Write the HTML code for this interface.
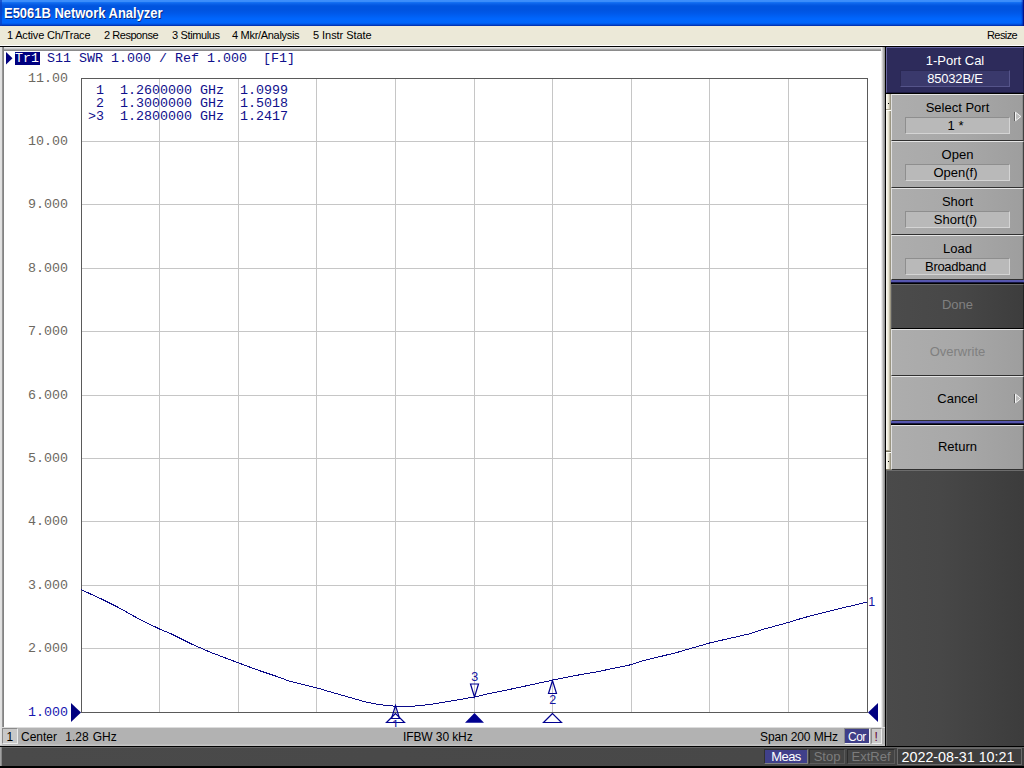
<!DOCTYPE html>
<html>
<head>
<meta charset="utf-8">
<title>E5061B Network Analyzer</title>
<style>
html,body{margin:0;padding:0;}
body{width:1024px;height:768px;overflow:hidden;background:#444444;position:relative;font-family:"Liberation Sans",sans-serif;}
.abs{position:absolute;}
#title{left:0;top:0;width:1024px;height:26px;background:linear-gradient(to bottom,#3d8ffc 0px,#3a8cfa 1.5px,#1470f2 2.5px,#0a60e8 4px,#0054de 6px,#0054e0 10px,#0058e8 13px,#0062f6 17px,#0066fe 19px,#0065fa 23px,#004cd8 24.5px,#0034b4 25.5px,#002ea8 26px);}
#title .t{position:absolute;left:4px;top:4.5px;font-size:14px;transform:scaleX(0.925);transform-origin:0 0;font-weight:bold;color:#fff;line-height:16px;white-space:nowrap;text-shadow:1px 1px 0 #0a2a80;}
#title .le{position:absolute;left:0;top:0;width:2px;height:26px;background:#0a3fc0;opacity:.7}
#menu{left:0;top:26px;width:1024px;height:19px;background:#ece9d8;}
#menu span{position:absolute;top:3px;font-size:11px;line-height:13px;color:#000;white-space:nowrap;}
#mline1{left:0;top:45px;width:1024px;height:1px;background:#ffffff;}
#mline2{left:0;top:46px;width:1024px;height:1px;background:#000000;}
/* plot window */
#plotwin{left:0;top:47px;width:885px;height:680px;background:#ffffff;}
#pw-l{left:0;top:47px;width:4px;height:680px;background:linear-gradient(to right,#e4e4e4 0,#dcdcdc 2px,#a0a0a0 2px,#787878 4px);}
#pw-t{left:0;top:47px;width:885px;height:4px;background:linear-gradient(to bottom,#e6e6e6 0,#e0e0e0 1px,#cccccc 1.5px,#a6a6a6 2.5px,#7e7e7e 4px);}
#pw-r{left:881px;top:47px;width:4px;height:700px;background:linear-gradient(to right,#fafafa 0,#e0e0e0 1px,#bababa 2px,#868686 4px);}
#vblack{left:885px;top:47px;width:1px;height:700px;background:#000;}
.mono{font-family:"Liberation Mono",monospace;font-size:13.33px;line-height:13px;white-space:pre;}
#trhdr{left:15px;top:52px;height:13px;color:#10108c;}
#trhdr b{font-weight:normal;background:#000080;color:#fff;display:inline-block;height:13px;width:25px;margin-right:-1px;}
#mk{left:88px;top:84px;color:#10108c;}
.yl{left:28px;width:40px;color:#6c6860;text-align:left;}
/* status bar */
#chbar{left:0;top:727px;width:885px;height:17px;background:#b2b2b2;}
#chbar .tx{position:absolute;top:3px;font-size:12px;line-height:14px;color:#000;white-space:pre;}
#hl745{left:0;top:744px;width:885px;height:2px;background:linear-gradient(to bottom,#b8b8b8,#c6c6c6);}
#bl746{left:0;top:746px;width:1024px;height:1px;background:#000;}
#botbar{left:0;top:747px;width:1024px;height:21px;background:linear-gradient(to right,#4a4a4a 0,#484848 75%,#3e3e3e 100%);}
.sb{position:absolute;top:749px;height:15px;font-size:14px;line-height:15px;text-align:center;white-space:nowrap;box-sizing:border-box;}
/* soft keys */
#sktitle{left:886px;top:47px;width:138px;height:46px;background:#2d2b5b;box-sizing:border-box;border-top:1px solid #6a68a2;border-left:1px solid #6a68a2;border-right:1px solid #1c1a40;border-bottom:1px solid #1c1a40;}
#sktitle .a{position:absolute;left:0;width:100%;top:5px;text-align:center;color:#fff;font-size:13px;line-height:15px;}
#sktitle .b{position:absolute;left:13px;top:22px;width:110px;height:17px;box-sizing:border-box;background:#3a396c;border-top:1px solid #2a2854;border-left:1px solid #2a2854;border-right:1px solid #55548a;border-bottom:1px solid #55548a;text-align:center;color:#fff;font-size:13px;line-height:15px;letter-spacing:-0.2px;}
#skbl{left:886px;top:93px;width:138px;height:1px;background:#000;}
#handle{left:886px;top:94px;width:5px;height:376px;background:linear-gradient(to right,#fcfcf8 0,#f6f4ea 1px,#ece9d8 2px,#dcd8c4 3px,#a8a28c 4px,#8c8878 5px);}
.key{position:absolute;left:891px;width:133px;box-sizing:border-box;background:linear-gradient(to right,#adadad 0,#a8a8a8 50%,#9e9e9e 100%);border-top:1px solid #e4e4e4;border-left:1px solid #e0e0e0;border-right:1px solid #404040;border-bottom:1px solid #303030;box-shadow:inset -1px 0 0 #8c8c8c;color:#000;font-size:13px;text-align:center;}
.key .a{position:absolute;left:0;width:100%;text-align:center;line-height:15px;}
.key .v{position:absolute;left:13px;width:105px;height:17px;top:22px;padding-right:4px;box-sizing:border-box;background:#b9b9b9;border-top:1px solid #8e8e8e;border-left:1px solid #8e8e8e;border-right:1px solid #d4d4d4;border-bottom:1px solid #d4d4d4;line-height:15px;font-size:13px;}
.key.dark{background:linear-gradient(to right,#4b4b4b 0,#474747 50%,#3d3d3d 100%);box-shadow:none;border-top:1px solid #686868;border-left:1px solid #606060;border-right:1px solid #202020;border-bottom:1px solid #000;color:#808080;}
.key.dis{color:#808080;}
.sep{position:absolute;left:891px;width:133px;height:4px;background:linear-gradient(to bottom,#5a5ab4 0,#5252a8 2px,#1c1c50 2px,#101030 3px,#000 3px,#000 4px);}
</style>
</head>
<body>
<div id="title" class="abs"><div class="le"></div><div style="position:absolute;right:0;top:0;width:3px;height:26px;background:linear-gradient(to right,rgba(0,20,150,0) 0,rgba(0,20,150,.45) 1.5px,#00168e 2px,#00128a 3px)"></div><div class="t">E5061B Network Analyzer</div></div>
<div id="menu" class="abs">
<span style="left:7px;letter-spacing:-0.18px">1 Active Ch/Trace</span>
<span style="left:104px;letter-spacing:-0.46px">2 Response</span>
<span style="left:172px;letter-spacing:-0.36px">3 Stimulus</span>
<span style="left:232px;letter-spacing:-0.3px">4 Mkr/Analysis</span>
<span style="left:313px;letter-spacing:-0.05px">5 Instr State</span>
<span style="left:987px;letter-spacing:-0.58px">Resize</span>
</div>
<div id="mline1" class="abs"></div>
<div id="mline2" class="abs"></div>

<div id="plotwin" class="abs"></div>
<div id="pw-t" class="abs"></div>
<div id="pw-l" class="abs"></div>
<div id="pw-r" class="abs"></div>
<div id="vblack" class="abs"></div>

<svg class="abs" style="left:0;top:0" width="1024" height="768" viewBox="0 0 1024 768">
<g id="grid" shape-rendering="crispEdges" stroke="#c6c6c6" stroke-width="1">
<path d="M159.5 79V712M238.5 79V712M316.5 79V712M395.5 79V712M474.5 79V712M552.5 79V712M631.5 79V712M709.5 79V712M788.5 79V712"/>
<path d="M82 141.5H867M82 204.5H867M82 268.5H867M82 331.5H867M82 395.5H867M82 458.5H867M82 521.5H867M82 585.5H867M82 648.5H867"/>
</g>
<rect x="81.5" y="78.5" width="786" height="634" fill="none" stroke="#5a5a5a" stroke-width="1" shape-rendering="crispEdges"/>
<!-- trace -->
<path id="trace" fill="none" stroke="#0a0a8a" stroke-width="1" shape-rendering="crispEdges" stroke-linejoin="round" d="M81.0 589.6 L101.5 599.0 L117.8 607.2 L139.0 619.0 L159.5 629.0 L171.5 634.0 L191.5 644.0 L210.2 652.2 L238.2 662.8 L259.0 670.5 L279.0 677.2 L289.0 681.0 L300.0 683.8 L316.2 687.7 L332.5 692.5 L350.0 697.5 L365.0 701.8 L377.5 704.3 L387.5 705.6 L396.2 706.2 L415.0 706.0 L430.0 704.5 L450.0 701.2 L465.0 698.6 L475.0 696.9 L490.0 693.4 L512.5 688.8 L532.5 684.5 L552.5 680.2 L574.4 675.7 L595.0 672.2 L631.0 664.7 L643.0 660.8 L677.5 652.3 L687.8 649.3 L709.5 643.0 L749.7 633.8 L760.0 630.2 L788.5 622.4 L803.0 617.9 L832.2 610.4 L867.0 602.1"/>
<!-- header triangle -->
<polygon points="6,52 12.5,58.2 6,64.5" fill="#000080"/>
<!-- ref triangles -->
<polygon points="71,703 81,712.5 71,722" fill="#000080"/>
<polygon points="878,703 868,712.5 878,722" fill="#000080"/>
<!-- markers -->
<g fill="none" stroke="#000090" stroke-width="1.2">
<polygon points="395.5,705.5 391.5,718.5 399.5,718.5" />
<polygon points="395.5,713.5 386.5,722.5 404.5,722.5" />
<polygon points="552.5,680.5 548.5,693.5 556.5,693.5" />
<polygon points="552.5,713.5 543.5,722.5 561.5,722.5" />
<polygon points="474.5,697 470.5,684 478.5,684" />
</g>
<polygon points="474.5,713 465,722.8 484,722.8" fill="#000090"/>
<g font-family="Liberation Sans, sans-serif" font-size="12.5px" fill="#1414a0">
<text x="471.3" y="680.8">3</text>
<text x="549.3" y="704">2</text>
<text x="392" y="728.5">1</text>
<text x="868.3" y="606">1</text>
</g>
</svg>

<div id="trhdr" class="abs mono"><b>Tr1</b> S11 SWR 1.000 / Ref 1.000  [F1]</div>
<div id="mk" class="abs mono"> 1  1.2600000 GHz  1.0999
 2  1.3000000 GHz  1.5018
&gt;3  1.2800000 GHz  1.2417</div>

<div class="abs mono yl" style="top:72px">11.00</div>
<div class="abs mono yl" style="top:135px">10.00</div>
<div class="abs mono yl" style="top:198px">9.000</div>
<div class="abs mono yl" style="top:262px">8.000</div>
<div class="abs mono yl" style="top:325px">7.000</div>
<div class="abs mono yl" style="top:389px">6.000</div>
<div class="abs mono yl" style="top:452px">5.000</div>
<div class="abs mono yl" style="top:515px">4.000</div>
<div class="abs mono yl" style="top:579px">3.000</div>
<div class="abs mono yl" style="top:642px">2.000</div>
<div class="abs mono yl" style="top:706px;color:#1818b0">1.000</div>

<!-- channel status bar -->
<div id="chbar" class="abs">
<div style="position:absolute;left:0;top:0;width:885px;height:1px;background:#dcdcdc"></div>
<div style="position:absolute;left:2px;top:1px;width:16px;height:16px;box-sizing:border-box;background:#c8c8c8;border-top:1px solid #8a8a8a;border-left:1px solid #8a8a8a;border-right:1px solid #ececec;border-bottom:1px solid #ececec;"></div>
<div class="tx" style="left:6.5px">1</div>
<div class="tx" style="left:21px;word-spacing:0.8px">Center  1.28 GHz</div>
<div class="tx" style="left:403px;letter-spacing:-0.1px">IFBW 30 kHz</div>
<div class="tx" style="left:760px;letter-spacing:-0.12px">Span 200 MHz</div>
<div style="position:absolute;left:844px;top:1px;width:26px;height:16px;background:#3e3e88;border-top:1px solid #8a8a8a;border-left:1px solid #8a8a8a;border-right:1px solid #f0f0f0;border-bottom:1px solid #f0f0f0;box-sizing:border-box"></div>
<div class="tx" style="left:848px;color:#fff;letter-spacing:-0.5px">Cor</div>
<div style="position:absolute;left:871px;top:1px;width:11px;height:16px;box-sizing:border-box;background:#c8c8c8;border-top:1px solid #8a8a8a;border-left:1px solid #8a8a8a;border-right:1px solid #ececec;border-bottom:1px solid #ececec;"></div>
<div class="tx" style="left:874.5px;color:#600030">!</div>
</div>
<div id="hl745" class="abs"></div>
<div class="abs" style="left:0;top:727px;width:2px;height:18px;background:linear-gradient(to right,#e6e6e6,#dadada)"></div>
<div id="botbar" class="abs"></div>
<div id="bl746" class="abs"></div>
<div class="abs" style="left:0;top:747px;width:1024px;height:1px;background:#646464"></div>
<div class="abs" style="left:0;top:747px;width:2px;height:19px;background:linear-gradient(to right,#b0b0b0,#787878)"></div>
<div class="abs" style="left:0;top:766px;width:1024px;height:2px;background:#000"></div>
<div class="sb" style="left:764px;width:44px;background:#40408a;color:#fff;border:1px solid #808080;border-top-color:#303030;border-left-color:#303030;font-size:13px;line-height:14px;letter-spacing:-0.55px">Meas</div>
<div class="sb" style="left:809px;width:36px;background:#444;color:#7c7c7c;border:1px solid #5c5c5c;border-top-color:#2c2c2c;border-left-color:#2c2c2c;font-size:13px;line-height:14px">Stop</div>
<div class="sb" style="left:847px;width:48px;background:#444;color:#7c7c7c;border:1px solid #5c5c5c;border-top-color:#2c2c2c;border-left-color:#2c2c2c;font-size:13px;line-height:14px">ExtRef</div>
<div class="sb" style="left:897px;top:748px;width:125px;height:17px;background:#3e3e3e;color:#fff;border:1px solid #6a6a6a;line-height:17px;font-size:14.3px;text-indent:-3px">2022-08-31 10:21</div>

<!-- softkey panel -->
<div class="abs" style="left:886px;top:470px;width:138px;height:276px;background:linear-gradient(to right,#6a6a6a 0,#6a6a6a 1px,#4a4a4a 1px,#474747 40%,#3c3c3c 100%)"></div>
<div id="sktitle" class="abs"><div class="a">1-Port Cal</div><div class="b">85032B/E</div></div>
<div id="skbl" class="abs"></div>
<div class="abs" style="left:886px;top:470px;width:138px;height:1px;background:#6c6c6c;z-index:2"></div>
<div id="handle" class="abs"></div>
<div class="abs" style="left:886px;top:109px;width:5px;height:1px;background:#aaa590"></div>
<div class="abs" style="left:886px;top:110px;width:5px;height:1px;background:#fffff8"></div>
<div class="abs" style="left:886px;top:450px;width:5px;height:1px;background:#aaa590"></div>
<div class="abs" style="left:886px;top:451px;width:5px;height:1px;background:#77715f"></div>
<div class="abs" style="left:886px;top:452px;width:5px;height:1px;background:#fffff8"></div>
<div class="abs" style="left:888px;top:103px;width:1px;height:1px;background:#000"></div>
<div class="abs" style="left:888px;top:461px;width:1px;height:1px;background:#000"></div>
<div class="abs" style="left:886px;top:469px;width:5px;height:1px;background:#8a8470"></div>

<div class="key" style="top:94px;height:47px"><div class="a" style="top:5px">Select Port</div><div class="v">1 *</div></div>
<div class="key" style="top:141px;height:47px"><div class="a" style="top:5px">Open</div><div class="v">Open(f)</div></div>
<div class="key" style="top:188px;height:47px"><div class="a" style="top:5px">Short</div><div class="v">Short(f)</div></div>
<div class="key" style="top:235px;height:45px"><div class="a" style="top:5px">Load</div><div class="v" style="letter-spacing:-0.3px">Broadband</div></div>
<div class="sep" style="top:280px"></div>
<div class="key dark" style="top:284px;height:45px"><div class="a" style="top:12px">Done</div></div>
<div class="key dis" style="top:329px;height:47px"><div class="a" style="top:14px">Overwrite</div></div>
<div class="key" style="top:376px;height:45px"><div class="a" style="top:14px">Cancel</div></div>
<div class="sep" style="top:421px"></div>
<div class="key" style="top:425px;height:45px"><div class="a" style="top:13px">Return</div></div>

<svg class="abs" style="left:1012px;top:108px" width="12" height="18" viewBox="0 0 12 18"><path d="M2.5 4V13" stroke="#606060" stroke-width="1" fill="none"/><path d="M3.5 4.2L8.9 8.5L3.5 12.8Z" fill="#bcbcbc" stroke="#f4f4f4" stroke-width="1"/></svg>
<svg class="abs" style="left:1012px;top:390px" width="12" height="18" viewBox="0 0 12 18"><path d="M2.5 4V13" stroke="#606060" stroke-width="1" fill="none"/><path d="M3.5 4.2L8.9 8.5L3.5 12.8Z" fill="#bcbcbc" stroke="#f4f4f4" stroke-width="1"/></svg>
</body>
</html>
